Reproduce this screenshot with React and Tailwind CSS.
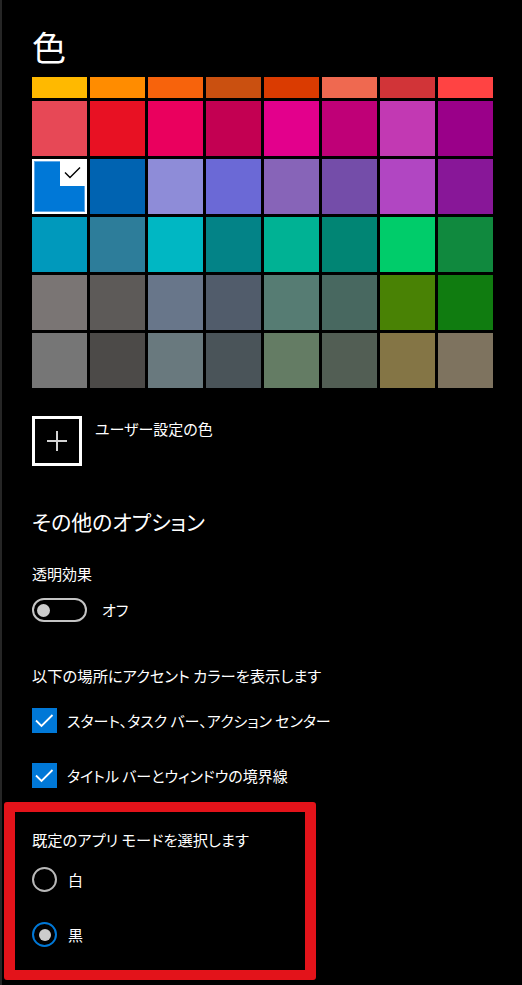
import React from "react";

const rows = [
  ["#FFB900", "#FF8C00", "#F7630C", "#CA5010", "#DA3B01", "#EF6950", "#D13438", "#FF4343"],
  ["#E74856", "#E81123", "#EA005E", "#C30052", "#E3008C", "#BF0077", "#C239B3", "#9A0089"],
  ["#0078D7", "#0063B1", "#8E8CD8", "#6B69D6", "#8764B8", "#744DA9", "#B146C2", "#881798"],
  ["#0099BC", "#2D7D9A", "#00B7C3", "#038387", "#00B294", "#018574", "#00CC6A", "#10893E"],
  ["#7A7574", "#5D5A58", "#68768A", "#515C6B", "#567C73", "#486860", "#498205", "#107C10"],
  ["#767676", "#4C4A48", "#69797E", "#4A5459", "#647C64", "#525E54", "#847545", "#7E735F"],
];

function Swatch({ color, first, selected }) {
  if (selected) {
    return (
      <div className="relative h-[55px] w-[55px] border-2 border-white" style={{ backgroundColor: color }}>
        <div className="absolute inset-0 border border-[#5fa8e8]" />
        <div className="absolute right-0 top-0 h-[25px] w-[25px] bg-white">
          <svg width="25" height="25" viewBox="0 0 25 25" fill="none">
            <path d="M5 11.5 L10 16.5 L20 6.5" stroke="#000" strokeWidth="1.4" />
          </svg>
        </div>
      </div>
    );
  }
  return <div className={first ? "h-[21px] w-[55px]" : "h-[55px] w-[55px]"} style={{ backgroundColor: color }} />;
}

function Check() {
  return (
    <div className="h-[25px] w-[25px] shrink-0 bg-[#0078d7]">
      <svg width="25" height="25" viewBox="0 0 25 25" fill="none">
        <path d="M4 12.5 L9.5 18 L20.5 7" stroke="#fff" strokeWidth="1.8" />
      </svg>
    </div>
  );
}

export default function App() {
  const font = {
    fontFamily: '"Noto Sans CJK JP", "Noto Sans", sans-serif',
    fontFeatureSettings: '"palt"',
  };
  return (
    <div className="flex h-[985px] w-[522px] flex-col overflow-hidden border-l-2 border-[#262626] bg-black text-white" style={font}>
      <div className="pl-[30px]">
        <div className="mt-[27px] text-[34px] leading-[40px]">色</div>
        <div className="mt-[10px] grid w-[461px] grid-cols-8 gap-[3px]">
          {rows.map((row, ri) =>
            row.map((c, ci) => (
              <Swatch key={ri + "-" + ci} color={c} first={ri === 0} selected={ri === 2 && ci === 0} />
            ))
          )}
        </div>
        <div className="mt-[28px] flex items-start">
          <div className="flex h-[50px] w-[50px] items-center justify-center border-[3px] border-white">
            <svg width="22" height="22" viewBox="0 0 22 22">
              <path d="M1 11 H21 M11 1 V21" stroke="#d4d4d4" strokeWidth="2" />
            </svg>
          </div>
          <div className="ml-[13px] mt-[3px] text-[15px] leading-[20px]">ユーザー設定の色</div>
        </div>
        <div className="mt-[41px] text-[21px] leading-[28px]">その他のオプション</div>
        <div className="mt-[29px] text-[15px] leading-[20px]">透明効果</div>
        <div className="mt-[14px] flex items-center">
          <div className="flex h-[24px] w-[55px] items-center rounded-full border-2 border-[#c4c4c4] pl-[3px]">
            <div className="h-[13px] w-[13px] rounded-full bg-[#cccccc]" />
          </div>
          <div className="ml-[15px] text-[15px] leading-[20px]">オフ</div>
        </div>
        <div className="mt-[43px] text-[15.3px] leading-[20px]">以下の場所にアクセント カラーを表示します</div>
        <div className="mt-[23px] flex items-center">
          <Check />
          <div className="ml-[10px] text-[15px] leading-[20px]">スタート、タスク バー、アクション センター</div>
        </div>
        <div className="mt-[30px] flex items-center">
          <Check />
          <div className="ml-[10px] text-[15px] leading-[20px]">タイトル バーとウィンドウの境界線</div>
        </div>
      </div>
      <div className="ml-[2px] mt-[14px] h-[178px] w-[312px] rounded-[3px] border-x-[11px] border-y-[10px] border-[#e3131a] pl-[17px] pt-[17px]">
        <div className="text-[15.3px] leading-[20px]">既定のアプリ モードを選択します</div>
        <div className="mt-[18px] flex items-center">
          <div className="h-[25px] w-[25px] rounded-full border-[2.5px] border-[#b8b8b8]" />
          <div className="ml-[11px] text-[15px] leading-[20px]">白</div>
        </div>
        <div className="mt-[30px] flex items-center">
          <div className="flex h-[25px] w-[25px] items-center justify-center rounded-full border-[2.5px] border-[#0078d7]">
            <div className="h-[12px] w-[12px] rounded-full bg-[#cccccc]" />
          </div>
          <div className="ml-[11px] text-[15px] leading-[20px]">黒</div>
        </div>
      </div>
    </div>
  );
}
